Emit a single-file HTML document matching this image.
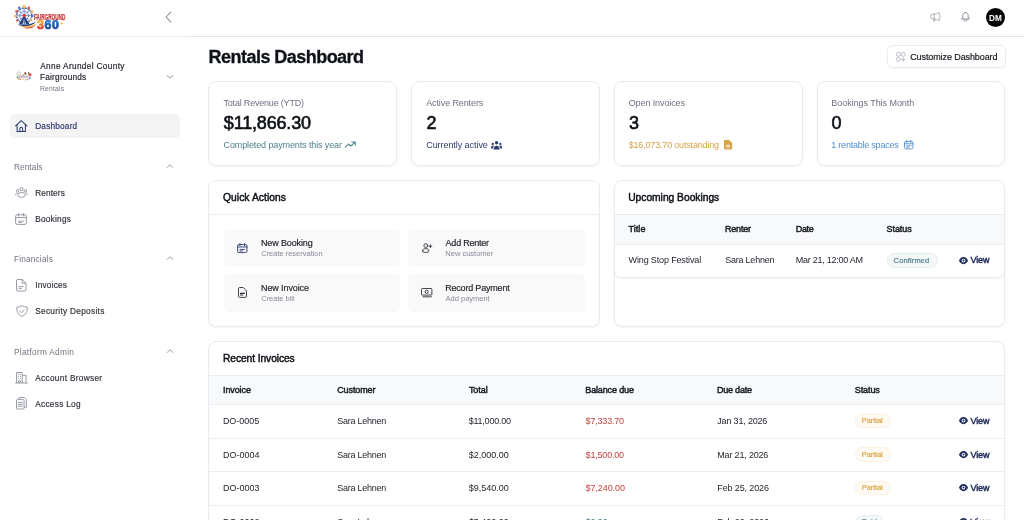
<!DOCTYPE html>
<html lang="en">
<head>
<meta charset="utf-8">
<title>Rentals Dashboard</title>
<style>
*{box-sizing:border-box;margin:0;padding:0}
html,body{width:1024px;height:520px;overflow:hidden;background:#fff}
body{font-family:"Liberation Sans",sans-serif;color:#111827;position:relative;font-size:9px}
#app{position:absolute;left:0;top:0;width:1024px;height:520px;overflow:hidden;will-change:transform}
.abs{position:absolute}
.t{position:absolute;white-space:nowrap;line-height:1}
svg{position:absolute;overflow:visible}
.card{position:absolute;background:#fff;border:1px solid #e9ebf1;border-radius:8px;box-shadow:0 1px 2px rgba(16,24,40,.05)}
.hr{position:absolute;height:1px;background:#eceef2}
.tile{position:absolute;background:#f9f9fa;border-radius:5px}
.thead{position:absolute;background:#f8f9fb}
.badge{position:absolute;border-radius:8px}
.partial{background:#fffaf2;border:1px solid #fcf1e0}
.confirmed{background:#f3f7f8;border:1px solid #e4edef}
</style>
</head>
<body>
<div id="app">
<div class="abs" style="left:0;top:36px;width:190px;height:1px;background:#ededef"></div>
<div class="abs" style="left:190px;top:36px;width:834px;height:1px;background:#e2e6ef"></div>
<svg style="left:12px;top:3px" width="58" height="28" viewBox="0 0 58 28">
  <defs>
    <linearGradient id="g3" x1="0" y1="0" x2="0" y2="1"><stop offset="0" stop-color="#f4bd36"/><stop offset=".35" stop-color="#f0a030"/><stop offset=".7" stop-color="#e04a2c"/><stop offset="1" stop-color="#d62b2b"/></linearGradient>
    <linearGradient id="g6" x1="0" y1="0" x2="0" y2="1"><stop offset="0" stop-color="#2f8fd8"/><stop offset=".5" stop-color="#1f5fb4"/><stop offset="1" stop-color="#17357e"/></linearGradient>
  </defs>
  <g fill="none" stroke="#5573b8">
    <circle cx="12.200" cy="12.600" r="7.600" stroke-width="1.600" stroke-dasharray="2.300 .7"/>
    <circle cx="12.200" cy="12.600" r="4.400" stroke-width="1.200" stroke-dasharray="1.600 .7" opacity=".85"/>
    <path d="M12.200 5v15.200M4.600 12.600h15.200M6.800 7.200l10.800 10.800M17.600 7.200L6.800 18" stroke-width=".8" opacity=".9"/>
  </g>
  <path d="M12.200 12.600L6.800 21.400h10.800z" fill="#223c82"/>
  <path d="M12.200 15L10.500 21h3.400z" fill="#e8edf7"/>
  <path d="M12.200 13.200v8" stroke="#223c82" stroke-width=".9"/>
  <circle cx="12.200" cy="12.600" r="1.700" fill="#dc3b34"/>
  <g fill="#efb94a" opacity=".85"><circle cx="12" cy="3.400" r="1.600"/><circle cx="3.400" cy="13" r="1.600"/><circle cx="20" cy="8.600" r="1.400"/><circle cx="19" cy="17.200" r="1.300"/></g>
  <g fill="#dc3b34" opacity=".8"><circle cx="4.600" cy="8.400" r="1.400"/><circle cx="16.800" cy="5" r="1.400"/><circle cx="5" cy="17.600" r="1.100"/></g>
  <g fill="#4a73c0"><circle cx="7.200" cy="4.800" r="1.300"/><circle cx="20.600" cy="13" r="1.100"/></g>
  <path d="M5.800 21.200c5.400 1.400 12.600.6 18.200-2.400c-3.600 4.600-13 6-18.200 2.400z" fill="#223c82"/>
  <path d="M7.600 22.600c5.400 1.300 12 .6 17.200-2.400c-2.800 5-12.200 5.800-17.200 2.400z" fill="#f0b840"/>
  <path d="M10.500 24.300c4.400.8 9.200.3 13-1.700c-2.400 3.200-9 3.800-13 1.700z" fill="#dc3b34"/>
  <text x="22" y="16.600" font-family="Liberation Sans, sans-serif" font-weight="700" font-size="8.200" fill="#c8363a" stroke="#c8363a" stroke-width=".25" textLength="31.300" lengthAdjust="spacingAndGlyphs">FAIRGROUND</text>
  <text y="25.700" font-family="Liberation Sans, sans-serif" font-weight="700" font-size="12.400" stroke-width=".7" stroke-linejoin="round"><tspan x="25.100" fill="url(#g3)" stroke="url(#g3)">3</tspan><tspan x="32.600" fill="url(#g6)" stroke="url(#g6)">6</tspan><tspan x="40.100" fill="url(#g6)" stroke="url(#g6)">0</tspan></text>
  <path d="M48.500 19.300l3.100 1.250l-3.100 1.250z" fill="#f0b840"/>
</svg>
<svg style="left:163px;top:11px" width="10" height="12" viewBox="0 0 10 12"><path d="M7.600 1.200L3.200 6l4.400 4.800" fill="none" stroke="#8a8f98" stroke-width="1.100" stroke-linecap="round" stroke-linejoin="round"/></svg>
<svg style="left:15.500px;top:71px" width="16" height="10.500" viewBox="0 0 16 10.500">
  <circle cx="2.800" cy="2.600" r="1.700" fill="none" stroke="#9a948c" stroke-width=".7" opacity=".8"/>
  <path d="M1.400 4.600h13.400v2.600H1.400z" fill="#bdbdc2" opacity=".6"/><path d="M3 5.400h2.400M6.200 5.800h3M10 5.400h2.600" stroke="#77777c" stroke-width=".7" opacity=".6"/>
  <path d="M6 3.600h2.200v1.400H6z" fill="#b08a62" opacity=".75"/>
  <path d="M8.400 1.600l1.400-.5l.6 2.600l-1.600.4z" fill="#4a4a4e" opacity=".8"/>
  <circle cx="9.300" cy="2.400" r=".8" fill="#c8392f" opacity=".9"/>
  <path d="M12.200 .8l1 .2l.2 2.800h-1.600z" fill="#5a4a42" opacity=".8"/>
  <circle cx="14.200" cy="3.700" r="1.350" fill="#e0392f" opacity=".9"/>
  <circle cx="1.300" cy="6.400" r=".8" fill="#3f8a3c" opacity=".8"/>
  <circle cx="2.700" cy="7.800" r=".9" fill="#e8742c" opacity=".85"/>
  <circle cx="4.300" cy="8.200" r=".7" fill="#d83a2f" opacity=".7"/>
  <circle cx="7.200" cy="8.600" r=".8" fill="#e9c84a" opacity=".8"/>
  <circle cx="9.800" cy="8.700" r=".8" fill="#5c9a4a" opacity=".75"/>
  <circle cx="11.800" cy="8.300" r=".7" fill="#d8492f" opacity=".7"/>
  <circle cx="13.600" cy="7.600" r=".8" fill="#3b5fc0" opacity=".8"/>
  <circle cx="14.800" cy="6" r=".6" fill="#c8392f" opacity=".6"/>
</svg>
<div class="t" style="left:40.20px;top:63.00px;font-size:8.25px;color:#1d2129;letter-spacing:0.349px;-webkit-text-stroke:0.18px #1d2129;">Anne Arundel County</div>
<div class="t" style="left:40.00px;top:74.00px;font-size:8.25px;color:#1d2129;letter-spacing:0.217px;-webkit-text-stroke:0.18px #1d2129;">Fairgrounds</div>
<div class="t" style="left:40.00px;top:86.00px;font-size:6.75px;color:#6f7480;letter-spacing:0.216px;">Rentals</div>
<svg style="left:165.500px;top:74.100px" width="8" height="6" viewBox="0 0 8 6"><path d="M1.200 1.500L4 4.300L6.800 1.500" fill="none" stroke="#8a8f98" stroke-width="1" stroke-linecap="round" stroke-linejoin="round"/></svg>
<div class="abs" style="left:9.500px;top:114.300px;width:170.500px;height:23.800px;border-radius:5px;background:#f4f4f5"></div>
<svg style="left:15px;top:120px" width="12.500" height="12" viewBox="0 0 12.500 12"><path d="M.6 5.900L6.250 .7l5.650 5.200M2.100 4.800v6.600h8.300V4.800M4.900 11.400V8.600a1.350 1.350 0 0 1 2.700 0v2.800" fill="none" stroke="#2c3a70" stroke-width="1.050" stroke-linecap="round" stroke-linejoin="round"/></svg>
<div class="t" style="left:35.20px;top:123.00px;font-size:8.25px;color:#2c3a70;letter-spacing:0.205px;-webkit-text-stroke:0.18px #2c3a70;">Dashboard</div>
<div class="t" style="left:14.00px;top:164.00px;font-size:8.25px;color:#6f7480;letter-spacing:0.074px;">Rentals</div>
<svg style="left:165.500px;top:162.9px" width="8" height="6" viewBox="0 0 8 6"><path d="M1.200 4.500L4 1.700L6.800 4.500" fill="none" stroke="#9aa0a8" stroke-width="1" stroke-linecap="round" stroke-linejoin="round"/></svg>
<svg style="left:15px;top:187px" width="13" height="11" viewBox="0 0 13 11" fill="none" stroke="#8b909a" stroke-width=".9"><circle cx="6.500" cy="2.200" r="1.600"/><circle cx="2.600" cy="3.800" r="1.300"/><circle cx="10.400" cy="3.800" r="1.300"/><path d="M2.800 8.200c0-1.800 1.500-2.700 3.700-2.700s3.700.9 3.700 2.700c0 1.300-1.500 2-3.700 2s-3.700-.7-3.700-2zM.6 8.200c0-1.300.7-2.200 2.100-2.400M12.400 8.200c0-1.300-.7-2.200-2.100-2.400"/></svg>
<div class="t" style="left:35.20px;top:190.00px;font-size:8.25px;color:#30343c;letter-spacing:0.118px;-webkit-text-stroke:0.18px #30343c;">Renters</div>
<svg style="left:15px;top:213px" width="12" height="12" viewBox="0 0 12 12" fill="none" stroke="#8b909a" stroke-width=".9"><rect x=".6" y="1.800" width="10.800" height="9.600" rx="1.600"/><path d="M.6 4.600h10.800M3.400 .5v2.400M8.600 .5v2.400M3.600 8.200h1.600M6.200 8.200h2.400M3.600 9.600h2.800" stroke-linecap="round"/></svg>
<div class="t" style="left:35.20px;top:216.00px;font-size:8.25px;color:#30343c;letter-spacing:0.246px;-webkit-text-stroke:0.18px #30343c;">Bookings</div>
<div class="t" style="left:14.00px;top:256.00px;font-size:8.25px;color:#6f7480;letter-spacing:0.184px;">Financials</div>
<svg style="left:165.500px;top:255.4px" width="8" height="6" viewBox="0 0 8 6"><path d="M1.200 4.500L4 1.700L6.800 4.500" fill="none" stroke="#9aa0a8" stroke-width="1" stroke-linecap="round" stroke-linejoin="round"/></svg>
<svg style="left:16px;top:279px" width="10.500" height="12.500" viewBox="0 0 10.500 12.500" fill="none" stroke="#8b909a" stroke-width=".9"><path d="M1.800 .5h4.400L10 4.200v6.600a1.200 1.200 0 0 1-1.200 1.200H1.800A1.200 1.200 0 0 1 .5 10.800V1.800A1.200 1.200 0 0 1 1.800 .5zM6.200 .5V4.200H10" stroke-linejoin="round"/><path d="M2.800 7.600h4.400M2.800 9.400h2.600" stroke-linecap="round"/></svg>
<div class="t" style="left:35.20px;top:282.00px;font-size:8.25px;color:#30343c;letter-spacing:0.219px;-webkit-text-stroke:0.18px #30343c;">Invoices</div>
<svg style="left:15.500px;top:305.400px" width="12" height="12" viewBox="0 0 12 12" fill="none" stroke="#8b909a" stroke-width=".9"><path d="M6 .6C4.600 1.600 2.800 2.100 .8 2.100c-.3 4.200 1 7.500 5.200 9.300c4.200-1.800 5.500-5.100 5.200-9.300C9.200 2.100 7.400 1.600 6 .6z" stroke-linejoin="round"/><path d="M4 6.200l1.500 1.500L8.200 4.900" stroke-linecap="round" stroke-linejoin="round"/></svg>
<div class="t" style="left:35.20px;top:308.00px;font-size:8.25px;color:#30343c;letter-spacing:0.307px;-webkit-text-stroke:0.18px #30343c;">Security Deposits</div>
<div class="t" style="left:14.00px;top:349.00px;font-size:8.25px;color:#6f7480;letter-spacing:0.304px;">Platform Admin</div>
<svg style="left:165.500px;top:347.9px" width="8" height="6" viewBox="0 0 8 6"><path d="M1.200 4.500L4 1.700L6.800 4.500" fill="none" stroke="#9aa0a8" stroke-width="1" stroke-linecap="round" stroke-linejoin="round"/></svg>
<svg style="left:15px;top:372px" width="13" height="11.500" viewBox="0 0 13 11.500" fill="none" stroke="#8b909a" stroke-width=".9"><path d="M1.600 11V.5h5.600V11M7.200 3.400h3.800V11M.2 11h12.600"/><path d="M3.200 2.600h.8M5 2.600h.8M3.200 4.600h.8M5 4.600h.8M3.200 6.600h.8M5 6.600h.8" stroke-width="1"/><path d="M3.500 11V8.800h1.800V11"/></svg>
<div class="t" style="left:35.20px;top:375.00px;font-size:8.25px;color:#30343c;letter-spacing:0.324px;-webkit-text-stroke:0.18px #30343c;">Account Browser</div>
<svg style="left:16px;top:397.400px" width="11" height="12.500" viewBox="0 0 11 12.500" fill="none" stroke="#8b909a" stroke-width=".9"><path d="M3 2.400V.6h5.400l2 2v7.600H8.400" stroke-linejoin="round"/><rect x=".5" y="2.600" width="7.600" height="9.400" rx=".8"/><path d="M2.200 5.400h4.200M2.200 7.300h4.200M2.200 9.200h4.200" stroke-linecap="round"/></svg>
<div class="t" style="left:35.20px;top:401.00px;font-size:8.25px;color:#30343c;letter-spacing:0.296px;-webkit-text-stroke:0.18px #30343c;">Access Log</div>
<svg style="left:930px;top:12px" width="10.400" height="9.600" viewBox="0 0 10.400 9.600" fill="none" stroke="#a3a6b0" stroke-width=".85" stroke-linejoin="round" stroke-linecap="round"><path d="M4.200 2.200H2.900a2.400 2.400 0 0 0 0 4.800h1.300M4.200 2.200C6 2.200 7.600 1.600 8.900 .5M4.200 2.200v4.800M4.200 7c1.800 0 3.400.6 4.700 1.700M8.900 .5c.7 1.200 1.100 2.600 1.100 4.100s-.4 2.900-1.100 4.100M3.400 7l.5 2.200h1l-.3-2.200"/></svg>
<svg style="left:961.300px;top:12px" width="9" height="9.800" viewBox="0 0 9 9.800" fill="none" stroke="#7d818c" stroke-width=".85" stroke-linejoin="round" stroke-linecap="round"><path d="M4.500 .5C2.900 .5 1.800 1.700 1.800 3.300v1.500c0 .9-.4 1.600-1.300 2.200h8C7.600 6.400 7.200 5.700 7.200 4.800V3.300C7.200 1.700 6.100 .5 4.500 .5zM2.900 7.300c.1 1.200.8 1.900 1.600 1.900s1.500-.7 1.600-1.900"/></svg>
<div class="abs" style="left:985.800px;top:7.500px;width:19.400px;height:19.400px;border-radius:50%;background:#050505"></div>
<div class="t" style="left:989.00px;top:15.00px;font-size:8.25px;color:#fff;letter-spacing:-0.072px;font-weight:700;">DM</div>
<div class="t" style="left:208.60px;top:48.00px;font-size:18px;color:#0d1117;letter-spacing:-0.538px;font-weight:700;-webkit-text-stroke:0.3px #0d1117;">Rentals Dashboard</div>
<div class="abs" style="left:887px;top:45px;width:118.500px;height:23px;border:1px solid #ebecf1;border-radius:5px;background:#fff;box-shadow:0 1px 1px rgba(16,24,40,.03)"></div>
<svg style="left:895.900px;top:51.900px" width="9.500" height="9.700" viewBox="0 0 9.500 9.700" fill="none" stroke="#b0b3c0" stroke-width=".85"><circle cx="2.350" cy="2.350" r="2"/><circle cx="7.200" cy="2.350" r="2"/><circle cx="2.350" cy="7.400" r="2"/><path d="M7.300 5.800v3.400M5.600 7.500h3.400" stroke-linecap="round"/></svg>
<div class="t" style="left:910.20px;top:53.00px;font-size:9px;color:#14181f;letter-spacing:-0.096px;-webkit-text-stroke:0.18px #14181f;">Customize Dashboard</div>
<div class="card" style="left:208px;top:81px;width:188.500px;height:85px"></div>
<div class="card" style="left:411px;top:81px;width:188.500px;height:85px"></div>
<div class="card" style="left:614px;top:81px;width:188.500px;height:85px"></div>
<div class="card" style="left:816.5px;top:81px;width:188.500px;height:85px"></div>
<div class="t" style="left:223.50px;top:99.00px;font-size:9px;color:#6b7280;letter-spacing:-0.197px;">Total Revenue (YTD)</div>
<div class="t" style="left:223.80px;top:114.00px;font-size:18px;color:#0d1117;letter-spacing:-0.167px;-webkit-text-stroke:0.6px #0d1117;">$11,866.30</div>
<div class="t" style="left:223.50px;top:141.00px;font-size:9px;color:#4f828d;letter-spacing:-0.113px;">Completed payments this year</div>
<div class="t" style="left:426.20px;top:99.00px;font-size:9px;color:#6b7280;letter-spacing:-0.109px;">Active Renters</div>
<div class="t" style="left:426.50px;top:114.00px;font-size:18px;color:#0d1117;-webkit-text-stroke:0.6px #0d1117;">2</div>
<div class="t" style="left:426.20px;top:141.00px;font-size:9px;color:#2c3a70;letter-spacing:-0.058px;">Currently active</div>
<div class="t" style="left:628.70px;top:99.00px;font-size:9px;color:#6b7280;letter-spacing:-0.104px;">Open Invoices</div>
<div class="t" style="left:629.00px;top:114.00px;font-size:18px;color:#0d1117;-webkit-text-stroke:0.6px #0d1117;">3</div>
<div class="t" style="left:628.70px;top:141.00px;font-size:9px;color:#d9a348;letter-spacing:-0.177px;">$16,073.70 outstanding</div>
<div class="t" style="left:831.30px;top:99.00px;font-size:9px;color:#6b7280;letter-spacing:-0.052px;">Bookings This Month</div>
<div class="t" style="left:831.60px;top:114.00px;font-size:18px;color:#0d1117;-webkit-text-stroke:0.6px #0d1117;">0</div>
<div class="t" style="left:831.30px;top:141.00px;font-size:9px;color:#4f8fd0;letter-spacing:-0.226px;">1 rentable spaces</div>
<svg style="left:345.300px;top:142.300px" width="10.500" height="6" viewBox="0 0 10.500 6" fill="none" stroke="#4f828d" stroke-width="1.050" stroke-linecap="round" stroke-linejoin="round"><path d="M.3 5.200L3.500 2l2.200 2L10 .4M6.800 -.1H10.300V3.200"/></svg>
<svg style="left:491.200px;top:141.200px" width="11.200" height="8.600" viewBox="0 0 11.200 8.600" fill="#2c3a70"><circle cx="5.600" cy="1.800" r="1.700"/><path d="M2.600 8.600c0-2.400 1.200-3.900 3-3.900s3 1.500 3 3.900z"/><circle cx="1.800" cy="2.900" r="1.150"/><circle cx="9.400" cy="2.900" r="1.150"/><path d="M0 7.600c0-1.900.7-3 1.900-3c.4 0 .7.100 1 .400c-.6.700-.9 1.600-1 2.600zM11.200 7.600c0-1.900-.7-3-1.900-3c-.4 0-.7.100-1 .400c.6.700.9 1.600 1 2.600z"/></svg>
<svg style="left:724.100px;top:140.400px" width="8.200" height="9.400" viewBox="0 0 8.200 9.400"><path d="M1.100 0h4.100l3 3v5.300a1.100 1.100 0 0 1-1.100 1.100H1.100A1.100 1.100 0 0 1 0 8.300V1.100A1.100 1.100 0 0 1 1.100 0z" fill="#d9a348"/><path d="M2.200 5.400h3.800M2.200 7h3.800" stroke="#fff" stroke-width=".9"/></svg>
<svg style="left:903.500px;top:140.400px" width="9.500" height="9.400" viewBox="0 0 9.500 9.400" fill="none" stroke="#4f8fd0" stroke-width=".9"><rect x=".5" y="1.500" width="8.500" height="7.400" rx="1.300"/><path d="M.5 3.800h8.500M2.700 .4v2M6.800 .4v2M2.600 5.800h1.200M4.600 5.800h2.200M2.600 7.200h2.200" stroke-linecap="round"/></svg>
<div class="card" style="left:208px;top:180px;width:391.800px;height:146.700px"></div>
<div class="t" style="left:223.00px;top:193.00px;font-size:10.25px;color:#0d1117;letter-spacing:0.072px;-webkit-text-stroke:0.45px #0d1117;">Quick Actions</div>
<div class="hr" style="left:209px;top:214px;width:389.800px"></div>
<div class="tile" style="left:223.5px;top:228.7px;width:176.8px;height:38px"></div>
<div class="tile" style="left:223.5px;top:273.8px;width:176.8px;height:38px"></div>
<div class="tile" style="left:407.9px;top:228.7px;width:177px;height:38px"></div>
<div class="tile" style="left:407.9px;top:273.8px;width:177px;height:38px"></div>
<svg style="left:236.800px;top:243px" width="10.600" height="10.200" viewBox="0 0 10.600 10.200" fill="none" stroke="#2c3a70" stroke-width=".9"><rect x=".6" y="1.600" width="9.400" height="8" rx="1.400"/><path d="M.6 4h9.400M3 .5v2.200M7.600 .5v2.200M3 6.400h1.200M5 6.400h2.400M3 7.900h2.600" stroke-linecap="round"/></svg>
<div class="t" style="left:261.00px;top:239.00px;font-size:9px;color:#23272f;letter-spacing:-0.128px;-webkit-text-stroke:0.18px #23272f;">New Booking</div>
<div class="t" style="left:261.20px;top:250.00px;font-size:7.5px;color:#868b95;letter-spacing:-0.011px;">Create reservation</div>
<svg style="left:421.600px;top:243px" width="10.200" height="10" viewBox="0 0 10.200 10" fill="none" stroke="#2b2f38" stroke-width=".9" stroke-linecap="round"><circle cx="3.800" cy="2.600" r="1.900"/><path d="M.6 8c0-1.500 1.400-2.400 3.200-2.400S7 6.500 7 8c0 .8-1.400 1.400-3.200 1.400S.6 8.800.6 8zM8.400 1.800v2.800M7 3.200h2.800"/></svg>
<div class="t" style="left:445.60px;top:239.00px;font-size:9px;color:#23272f;letter-spacing:-0.231px;-webkit-text-stroke:0.18px #23272f;">Add Renter</div>
<div class="t" style="left:445.30px;top:250.00px;font-size:7.5px;color:#868b95;letter-spacing:0.005px;">New customer</div>
<svg style="left:238px;top:287.200px" width="9" height="10.800" viewBox="0 0 9 10.800" fill="none" stroke="#2b2f38" stroke-width=".9" stroke-linejoin="round"><path d="M1.700 .5h3.500L8.500 3.800v5.400a1.200 1.200 0 0 1-1.200 1.200H1.700A1.200 1.200 0 0 1 .5 9.200V1.700A1.200 1.200 0 0 1 1.700 .5z"/><path d="M2.500 6.400h3.900M2.500 8h2.200" stroke-linecap="round" stroke-width="1.100"/></svg>
<div class="t" style="left:261.00px;top:284.00px;font-size:9px;color:#23272f;letter-spacing:-0.101px;-webkit-text-stroke:0.18px #23272f;">New Invoice</div>
<div class="t" style="left:261.20px;top:295.00px;font-size:7.5px;color:#868b95;letter-spacing:-0.033px;">Create bill</div>
<svg style="left:420.800px;top:288.400px" width="11.400" height="9.400" viewBox="0 0 11.400 9.400" fill="none" stroke="#2b2f38" stroke-width=".9"><rect x=".5" y=".5" width="10.400" height="6.600" rx=".8"/><circle cx="5.700" cy="3.800" r="1.600"/><path d="M2 8.800h8.400" stroke-linecap="round"/></svg>
<div class="t" style="left:445.20px;top:284.00px;font-size:9px;color:#23272f;letter-spacing:-0.194px;-webkit-text-stroke:0.18px #23272f;">Record Payment</div>
<div class="t" style="left:445.60px;top:295.00px;font-size:7.5px;color:#868b95;letter-spacing:-0.009px;">Add payment</div>
<div class="card" style="left:614px;top:180px;width:391px;height:146.700px"></div>
<div class="t" style="left:628.20px;top:193.00px;font-size:10.25px;color:#0d1117;letter-spacing:-0.007px;-webkit-text-stroke:0.45px #0d1117;">Upcoming Bookings</div>
<div class="abs" style="left:614px;top:214px;width:391px;height:63.500px;border:1px solid #e9ebf0;border-radius:0 0 7px 7px;box-shadow:0 1px 2px rgba(16,24,40,.05)"></div>
<div class="thead" style="left:615px;top:215px;width:389px;height:28.500px"></div>
<div class="hr" style="left:615px;top:243.500px;width:389px"></div>
<div class="t" style="left:628.50px;top:225.00px;font-size:9px;color:#161a22;letter-spacing:0.056px;-webkit-text-stroke:0.45px #161a22;">Title</div>
<div class="t" style="left:725.00px;top:225.00px;font-size:9px;color:#161a22;letter-spacing:-0.211px;-webkit-text-stroke:0.45px #161a22;">Renter</div>
<div class="t" style="left:795.80px;top:225.00px;font-size:9px;color:#161a22;letter-spacing:-0.366px;-webkit-text-stroke:0.45px #161a22;">Date</div>
<div class="t" style="left:886.60px;top:225.00px;font-size:9px;color:#161a22;letter-spacing:-0.078px;-webkit-text-stroke:0.45px #161a22;">Status</div>
<div class="t" style="left:628.60px;top:256.00px;font-size:9px;color:#23272f;letter-spacing:-0.146px;">Wing Stop Festival</div>
<div class="t" style="left:725.20px;top:256.00px;font-size:9px;color:#23272f;letter-spacing:-0.222px;">Sara Lehnen</div>
<div class="t" style="left:795.80px;top:256.00px;font-size:9px;color:#23272f;letter-spacing:-0.253px;">Mar 21, 12:00 AM</div>
<div class="badge confirmed" style="left:887px;top:253px;width:50.500px;height:14.600px"></div>
<div class="t" style="left:893.60px;top:257.00px;font-size:7.5px;color:#4f828d;letter-spacing:0.135px;-webkit-text-stroke:0.18px #4f828d;">Confirmed</div>
<svg style="left:958.500px;top:256.6px" width="9" height="7.200" viewBox="0 0 9 7.200"><path d="M4.500 0C2.400 0 .7 1.500 0 3.600c.7 2.100 2.400 3.600 4.500 3.600S8.300 5.700 9 3.600C8.300 1.500 6.600 0 4.500 0z" fill="#1e2a5a"/><circle cx="4.500" cy="3.600" r="1.900" fill="#fff"/><circle cx="4.500" cy="3.600" r="1" fill="#1e2a5a"/></svg>
<div class="t" style="left:970.40px;top:256.00px;font-size:9px;color:#1e2a5a;letter-spacing:-0.077px;-webkit-text-stroke:0.45px #1e2a5a;">View</div>
<div class="card" style="left:208px;top:341px;width:797px;height:230px"></div>
<div class="t" style="left:223.00px;top:354.00px;font-size:10.25px;color:#0d1117;letter-spacing:-0.086px;-webkit-text-stroke:0.45px #0d1117;">Recent Invoices</div>
<div class="hr" style="left:209px;top:375px;width:795px"></div>
<div class="thead" style="left:209px;top:376px;width:795px;height:28px"></div>
<div class="hr" style="left:209px;top:404px;width:795px"></div>
<div class="t" style="left:223.00px;top:386.00px;font-size:9px;color:#161a22;letter-spacing:-0.097px;-webkit-text-stroke:0.45px #161a22;">Invoice</div>
<div class="t" style="left:337.20px;top:386.00px;font-size:9px;color:#161a22;letter-spacing:-0.096px;-webkit-text-stroke:0.45px #161a22;">Customer</div>
<div class="t" style="left:468.90px;top:386.00px;font-size:9px;color:#161a22;letter-spacing:-0.053px;-webkit-text-stroke:0.45px #161a22;">Total</div>
<div class="t" style="left:585.30px;top:386.00px;font-size:9px;color:#161a22;letter-spacing:-0.145px;-webkit-text-stroke:0.45px #161a22;">Balance due</div>
<div class="t" style="left:717.00px;top:386.00px;font-size:9px;color:#161a22;letter-spacing:-0.223px;-webkit-text-stroke:0.45px #161a22;">Due date</div>
<div class="t" style="left:854.80px;top:386.00px;font-size:9px;color:#161a22;letter-spacing:-0.094px;-webkit-text-stroke:0.45px #161a22;">Status</div>
<div class="t" style="left:222.90px;top:417.00px;font-size:9px;color:#23272f;letter-spacing:-0.019px;">DO-0005</div>
<div class="t" style="left:337.30px;top:417.00px;font-size:9px;color:#23272f;letter-spacing:-0.268px;">Sara Lehnen</div>
<div class="t" style="left:468.70px;top:417.00px;font-size:9px;color:#23272f;letter-spacing:-0.229px;">$11,000.00</div>
<div class="t" style="left:585.60px;top:417.00px;font-size:9px;color:#c2453d;letter-spacing:-0.194px;">$7,333.70</div>
<div class="t" style="left:717.30px;top:417.00px;font-size:9px;color:#23272f;letter-spacing:-0.179px;">Jan 31, 2026</div>
<div class="badge partial" style="left:855.200px;top:413.9px;width:35.800px;height:14.500px"></div>
<div class="t" style="left:861.80px;top:417.00px;font-size:7.5px;color:#d9a348;letter-spacing:-0.049px;-webkit-text-stroke:0.18px #d9a348;">Partial</div>
<svg style="left:958.500px;top:417px" width="9" height="7.200" viewBox="0 0 9 7.200"><path d="M4.500 0C2.400 0 .7 1.500 0 3.600c.7 2.100 2.400 3.600 4.500 3.600S8.300 5.700 9 3.600C8.300 1.500 6.600 0 4.500 0z" fill="#1e2a5a"/><circle cx="4.500" cy="3.600" r="1.900" fill="#fff"/><circle cx="4.500" cy="3.600" r="1" fill="#1e2a5a"/></svg>
<div class="t" style="left:970.40px;top:417.00px;font-size:9px;color:#1e2a5a;letter-spacing:-0.077px;-webkit-text-stroke:0.45px #1e2a5a;">View</div>
<div class="hr" style="left:209px;top:437.5px;width:795px"></div>
<div class="t" style="left:222.90px;top:451.00px;font-size:9px;color:#23272f;letter-spacing:0.010px;">DO-0004</div>
<div class="t" style="left:337.30px;top:451.00px;font-size:9px;color:#23272f;letter-spacing:-0.268px;">Sara Lehnen</div>
<div class="t" style="left:468.70px;top:451.00px;font-size:9px;color:#23272f;letter-spacing:-0.005px;">$2,000.00</div>
<div class="t" style="left:585.60px;top:451.00px;font-size:9px;color:#c2453d;letter-spacing:-0.194px;">$1,500.00</div>
<div class="t" style="left:717.30px;top:451.00px;font-size:9px;color:#23272f;letter-spacing:-0.179px;">Mar 21, 2026</div>
<div class="badge partial" style="left:855.200px;top:447.4px;width:35.800px;height:14.500px"></div>
<div class="t" style="left:861.80px;top:451.00px;font-size:7.5px;color:#d9a348;letter-spacing:-0.049px;-webkit-text-stroke:0.18px #d9a348;">Partial</div>
<svg style="left:958.500px;top:451px" width="9" height="7.200" viewBox="0 0 9 7.200"><path d="M4.500 0C2.400 0 .7 1.500 0 3.600c.7 2.100 2.400 3.600 4.500 3.600S8.300 5.700 9 3.600C8.300 1.500 6.600 0 4.500 0z" fill="#1e2a5a"/><circle cx="4.500" cy="3.600" r="1.900" fill="#fff"/><circle cx="4.500" cy="3.600" r="1" fill="#1e2a5a"/></svg>
<div class="t" style="left:970.40px;top:451.00px;font-size:9px;color:#1e2a5a;letter-spacing:-0.077px;-webkit-text-stroke:0.45px #1e2a5a;">View</div>
<div class="hr" style="left:209px;top:471.0px;width:795px"></div>
<div class="t" style="left:222.90px;top:484.00px;font-size:9px;color:#23272f;letter-spacing:0.010px;">DO-0003</div>
<div class="t" style="left:337.30px;top:484.00px;font-size:9px;color:#23272f;letter-spacing:-0.268px;">Sara Lehnen</div>
<div class="t" style="left:468.70px;top:484.00px;font-size:9px;color:#23272f;letter-spacing:-0.005px;">$9,540.00</div>
<div class="t" style="left:585.60px;top:484.00px;font-size:9px;color:#c2453d;letter-spacing:-0.083px;">$7,240.00</div>
<div class="t" style="left:717.30px;top:484.00px;font-size:9px;color:#23272f;letter-spacing:-0.121px;">Feb 25, 2026</div>
<div class="badge partial" style="left:855.200px;top:480.9px;width:35.800px;height:14.500px"></div>
<div class="t" style="left:861.80px;top:484.00px;font-size:7.5px;color:#d9a348;letter-spacing:-0.049px;-webkit-text-stroke:0.18px #d9a348;">Partial</div>
<svg style="left:958.500px;top:484px" width="9" height="7.200" viewBox="0 0 9 7.200"><path d="M4.500 0C2.400 0 .7 1.500 0 3.600c.7 2.100 2.400 3.600 4.500 3.600S8.300 5.700 9 3.600C8.300 1.500 6.600 0 4.500 0z" fill="#1e2a5a"/><circle cx="4.500" cy="3.600" r="1.900" fill="#fff"/><circle cx="4.500" cy="3.600" r="1" fill="#1e2a5a"/></svg>
<div class="t" style="left:970.40px;top:484.00px;font-size:9px;color:#1e2a5a;letter-spacing:-0.077px;-webkit-text-stroke:0.45px #1e2a5a;">View</div>
<div class="hr" style="left:209px;top:504.5px;width:795px"></div>
<div class="t" style="left:222.90px;top:518.00px;font-size:9px;color:#23272f;letter-spacing:0.010px;">DO-0002</div>
<div class="t" style="left:337.30px;top:518.00px;font-size:9px;color:#23272f;letter-spacing:-0.268px;">Sara Lehnen</div>
<div class="t" style="left:468.70px;top:518.00px;font-size:9px;color:#23272f;letter-spacing:-0.005px;">$5,400.00</div>
<div class="t" style="left:585.60px;top:518.00px;font-size:9px;color:#4f828d;letter-spacing:-0.106px;">$0.00</div>
<div class="t" style="left:717.30px;top:518.00px;font-size:9px;color:#23272f;letter-spacing:-0.121px;">Feb 20, 2026</div>
<div class="badge confirmed" style="left:855.200px;top:515.4px;width:28.800px;height:14.500px"></div>
<div class="t" style="left:861.80px;top:518.00px;font-size:7.5px;color:#4f828d;-webkit-text-stroke:0.18px #4f828d;">Paid</div>
<svg style="left:958.500px;top:518px" width="9" height="7.200" viewBox="0 0 9 7.200"><path d="M4.500 0C2.400 0 .7 1.500 0 3.600c.7 2.100 2.400 3.600 4.500 3.600S8.300 5.700 9 3.600C8.300 1.500 6.600 0 4.500 0z" fill="#1e2a5a"/><circle cx="4.500" cy="3.600" r="1.900" fill="#fff"/><circle cx="4.500" cy="3.600" r="1" fill="#1e2a5a"/></svg>
<div class="t" style="left:970.40px;top:518.00px;font-size:9px;color:#1e2a5a;letter-spacing:-0.077px;-webkit-text-stroke:0.45px #1e2a5a;">View</div>
</div>
</body>
</html>
